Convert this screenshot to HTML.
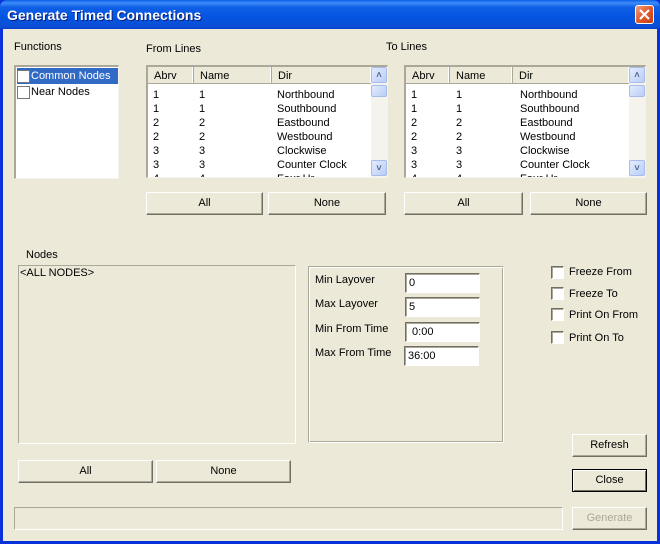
<!DOCTYPE html>
<html><head><meta charset="utf-8"><style>
*{margin:0;padding:0;box-sizing:border-box}
body{width:660px;height:544px;overflow:hidden;background:#0831d9;font-family:"Liberation Sans",sans-serif;font-size:11px;color:#000}
.a{position:absolute}
#win{position:absolute;left:3px;top:29px;width:654px;height:512px;background:#ECE9D8}
#title{position:absolute;left:0;top:0;width:660px;height:29px;background:linear-gradient(#0a5fe8 0%,#3d8bf7 10%,#0f5fe6 25%,#0454e0 60%,#0b4fd8 90%,#0840c8 100%);border-radius:7px 7px 0 0}
#title span{position:absolute;left:7px;top:7px;color:#fff;font-weight:bold;font-size:14px;text-shadow:1px 1px #0a1e7a}
#cls{position:absolute;left:635px;top:5px;width:19px;height:19px;background:linear-gradient(135deg,#f0a080,#e05a2c 50%,#c53a10);border:1px solid #fff;border-radius:3px}
.list{border-top:2px solid #aca899;border-left:2px solid #aca899;border-right:1px solid #f5f3ee;border-bottom:1px solid #f5f3ee;background:#fff;overflow:hidden}
.btn{position:absolute;background:#ECE9D8;border:1px solid;border-color:#fff #716f64 #716f64 #fff;box-shadow:inset -1px -1px #aca899;text-align:center;line-height:20px}
.hdr{position:absolute;top:0;height:17px;background:#ECE9D8;border-right:1px solid #aca899;border-bottom:1px solid #aca899;padding:3px 0 0 6px;box-shadow:inset -1px 0 #fff}
.sb{position:absolute;right:0;top:0;width:16px;height:100%;background:#f4f3ee}
.sbb{position:absolute;left:0;width:16px;height:16px;background:linear-gradient(135deg,#e4ecfd,#b8cdf7);border:1px solid #a8bcec;border-radius:2px;color:#4d6185;font-size:9px;text-align:center;line-height:14px;font-weight:bold}
.cb{position:absolute;width:13px;height:13px;background:#fff;border:1px solid;border-color:#716f64 #fff #fff #716f64;box-shadow:inset 1px 1px #aca899}
.inp{position:absolute;width:75px;height:20px;background:#fff;border:1px solid;border-color:#716f64 #fff #fff #716f64;box-shadow:inset 1px 1px #aca899;padding:3px 0 0 3px;font-size:11px}
</style></head><body>
<div id="title"><span>Generate Timed Connections</span><div id="cls"><svg width="17" height="17" viewBox="0 0 17 17"><path d="M4 4L13 13M13 4L4 13" stroke="#fff" stroke-width="2.2"/></svg></div></div>
<div id="win"></div>

<div class="a" style="left:14px;top:41px">Functions</div>
<div class="a list" style="left:14px;top:65px;width:105px;height:114px">
 <div class="a" style="left:1px;top:1px;width:101px;height:16px;background:#316ac5"></div>
 <div class="cb" style="left:1px;top:3px;border:1px solid #777;box-shadow:none"></div><div class="a" style="left:15px;top:3px;color:#fff">Common Nodes</div>
 <div class="cb" style="left:1px;top:19px;border:1px solid #777;box-shadow:none"></div><div class="a" style="left:15px;top:19px">Near Nodes</div>
</div>

<div class="a" style="left:146px;top:43px">From Lines</div>
<div class="a list" style="left:146px;top:65px;width:242px;height:113px">
 <div class="hdr" style="left:0;width:46px">Abrv</div>
 <div class="hdr" style="left:46px;width:78px">Name</div>
 <div class="hdr" style="left:124px;width:100px">Dir</div>
 <div class="a" style="left:5px;top:21px;line-height:14px">1<br>1<br>2<br>2<br>3<br>3<br>4</div>
 <div class="a" style="left:51px;top:21px;line-height:14px">1<br>1<br>2<br>2<br>3<br>3<br>4</div>
 <div class="a" style="left:129px;top:21px;line-height:14px">Northbound<br>Southbound<br>Eastbound<br>Westbound<br>Clockwise<br>Counter Clock<br>Four Hr</div>
 <div class="sb"><div class="sbb" style="top:0">&#708;</div><div class="sbb" style="top:18px;height:12px"></div><div class="sbb" style="top:93px">&#709;</div></div>
</div>

<div class="a" style="left:386px;top:41px">To Lines</div>
<div class="a list" style="left:404px;top:65px;width:242px;height:113px">
 <div class="hdr" style="left:0;width:44px">Abrv</div>
 <div class="hdr" style="left:44px;width:63px">Name</div>
 <div class="hdr" style="left:107px;width:117px">Dir</div>
 <div class="a" style="left:5px;top:21px;line-height:14px">1<br>1<br>2<br>2<br>3<br>3<br>4</div>
 <div class="a" style="left:50px;top:21px;line-height:14px">1<br>1<br>2<br>2<br>3<br>3<br>4</div>
 <div class="a" style="left:114px;top:21px;line-height:14px">Northbound<br>Southbound<br>Eastbound<br>Westbound<br>Clockwise<br>Counter Clock<br>Four Hr</div>
 <div class="sb"><div class="sbb" style="top:0">&#708;</div><div class="sbb" style="top:18px;height:12px"></div><div class="sbb" style="top:93px">&#709;</div></div>
</div>

<div class="btn" style="left:146px;top:192px;width:117px;height:23px">All</div>
<div class="btn" style="left:268px;top:192px;width:118px;height:23px">None</div>
<div class="btn" style="left:404px;top:192px;width:119px;height:23px">All</div>
<div class="btn" style="left:530px;top:192px;width:117px;height:23px">None</div>

<div class="a" style="left:26px;top:249px">Nodes</div>
<div class="a" style="left:18px;top:265px;width:278px;height:179px;border:1px solid;border-color:#aca899 #fff #fff #aca899"><div class="a" style="left:1px;top:1px">&lt;ALL NODES&gt;</div></div>

<div class="a" style="left:308px;top:266px;width:196px;height:177px;border:1px solid;border-color:#aca899 #fff #fff #aca899;box-shadow:1px 1px #fff inset,-1px -1px #aca899 inset"></div>
<div class="a" style="left:315px;top:274px">Min Layover</div>
<div class="a" style="left:315px;top:298px">Max Layover</div>
<div class="a" style="left:315px;top:323px">Min From Time</div>
<div class="a" style="left:315px;top:347px">Max From Time</div>
<div class="inp" style="left:405px;top:273px">0</div>
<div class="inp" style="left:405px;top:297px">5</div>
<div class="inp" style="left:405px;top:322px">&nbsp;0:00</div>
<div class="inp" style="left:404px;top:346px">36:00</div>

<div class="cb" style="left:551px;top:266px"></div><div class="a" style="left:569px;top:266px">Freeze From</div>
<div class="cb" style="left:551px;top:287px"></div><div class="a" style="left:569px;top:288px">Freeze To</div>
<div class="cb" style="left:551px;top:308px"></div><div class="a" style="left:569px;top:309px">Print On From</div>
<div class="cb" style="left:551px;top:331px"></div><div class="a" style="left:569px;top:332px">Print On To</div>

<div class="btn" style="left:572px;top:434px;width:75px;height:23px">Refresh</div>
<div class="btn" style="left:572px;top:469px;width:75px;height:23px;border:1px solid #000;box-shadow:inset 1px 1px #fff,inset -1px -1px #716f64;line-height:21px">Close</div>
<div class="btn" style="left:572px;top:507px;width:75px;height:23px;color:#aca899">Generate</div>

<div class="btn" style="left:18px;top:460px;width:135px;height:23px">All</div>
<div class="btn" style="left:156px;top:460px;width:135px;height:23px">None</div>

<div class="a" style="left:14px;top:507px;width:549px;height:23px;border:1px solid;border-color:#aca899 #fff #fff #aca899"></div>
</body></html>
